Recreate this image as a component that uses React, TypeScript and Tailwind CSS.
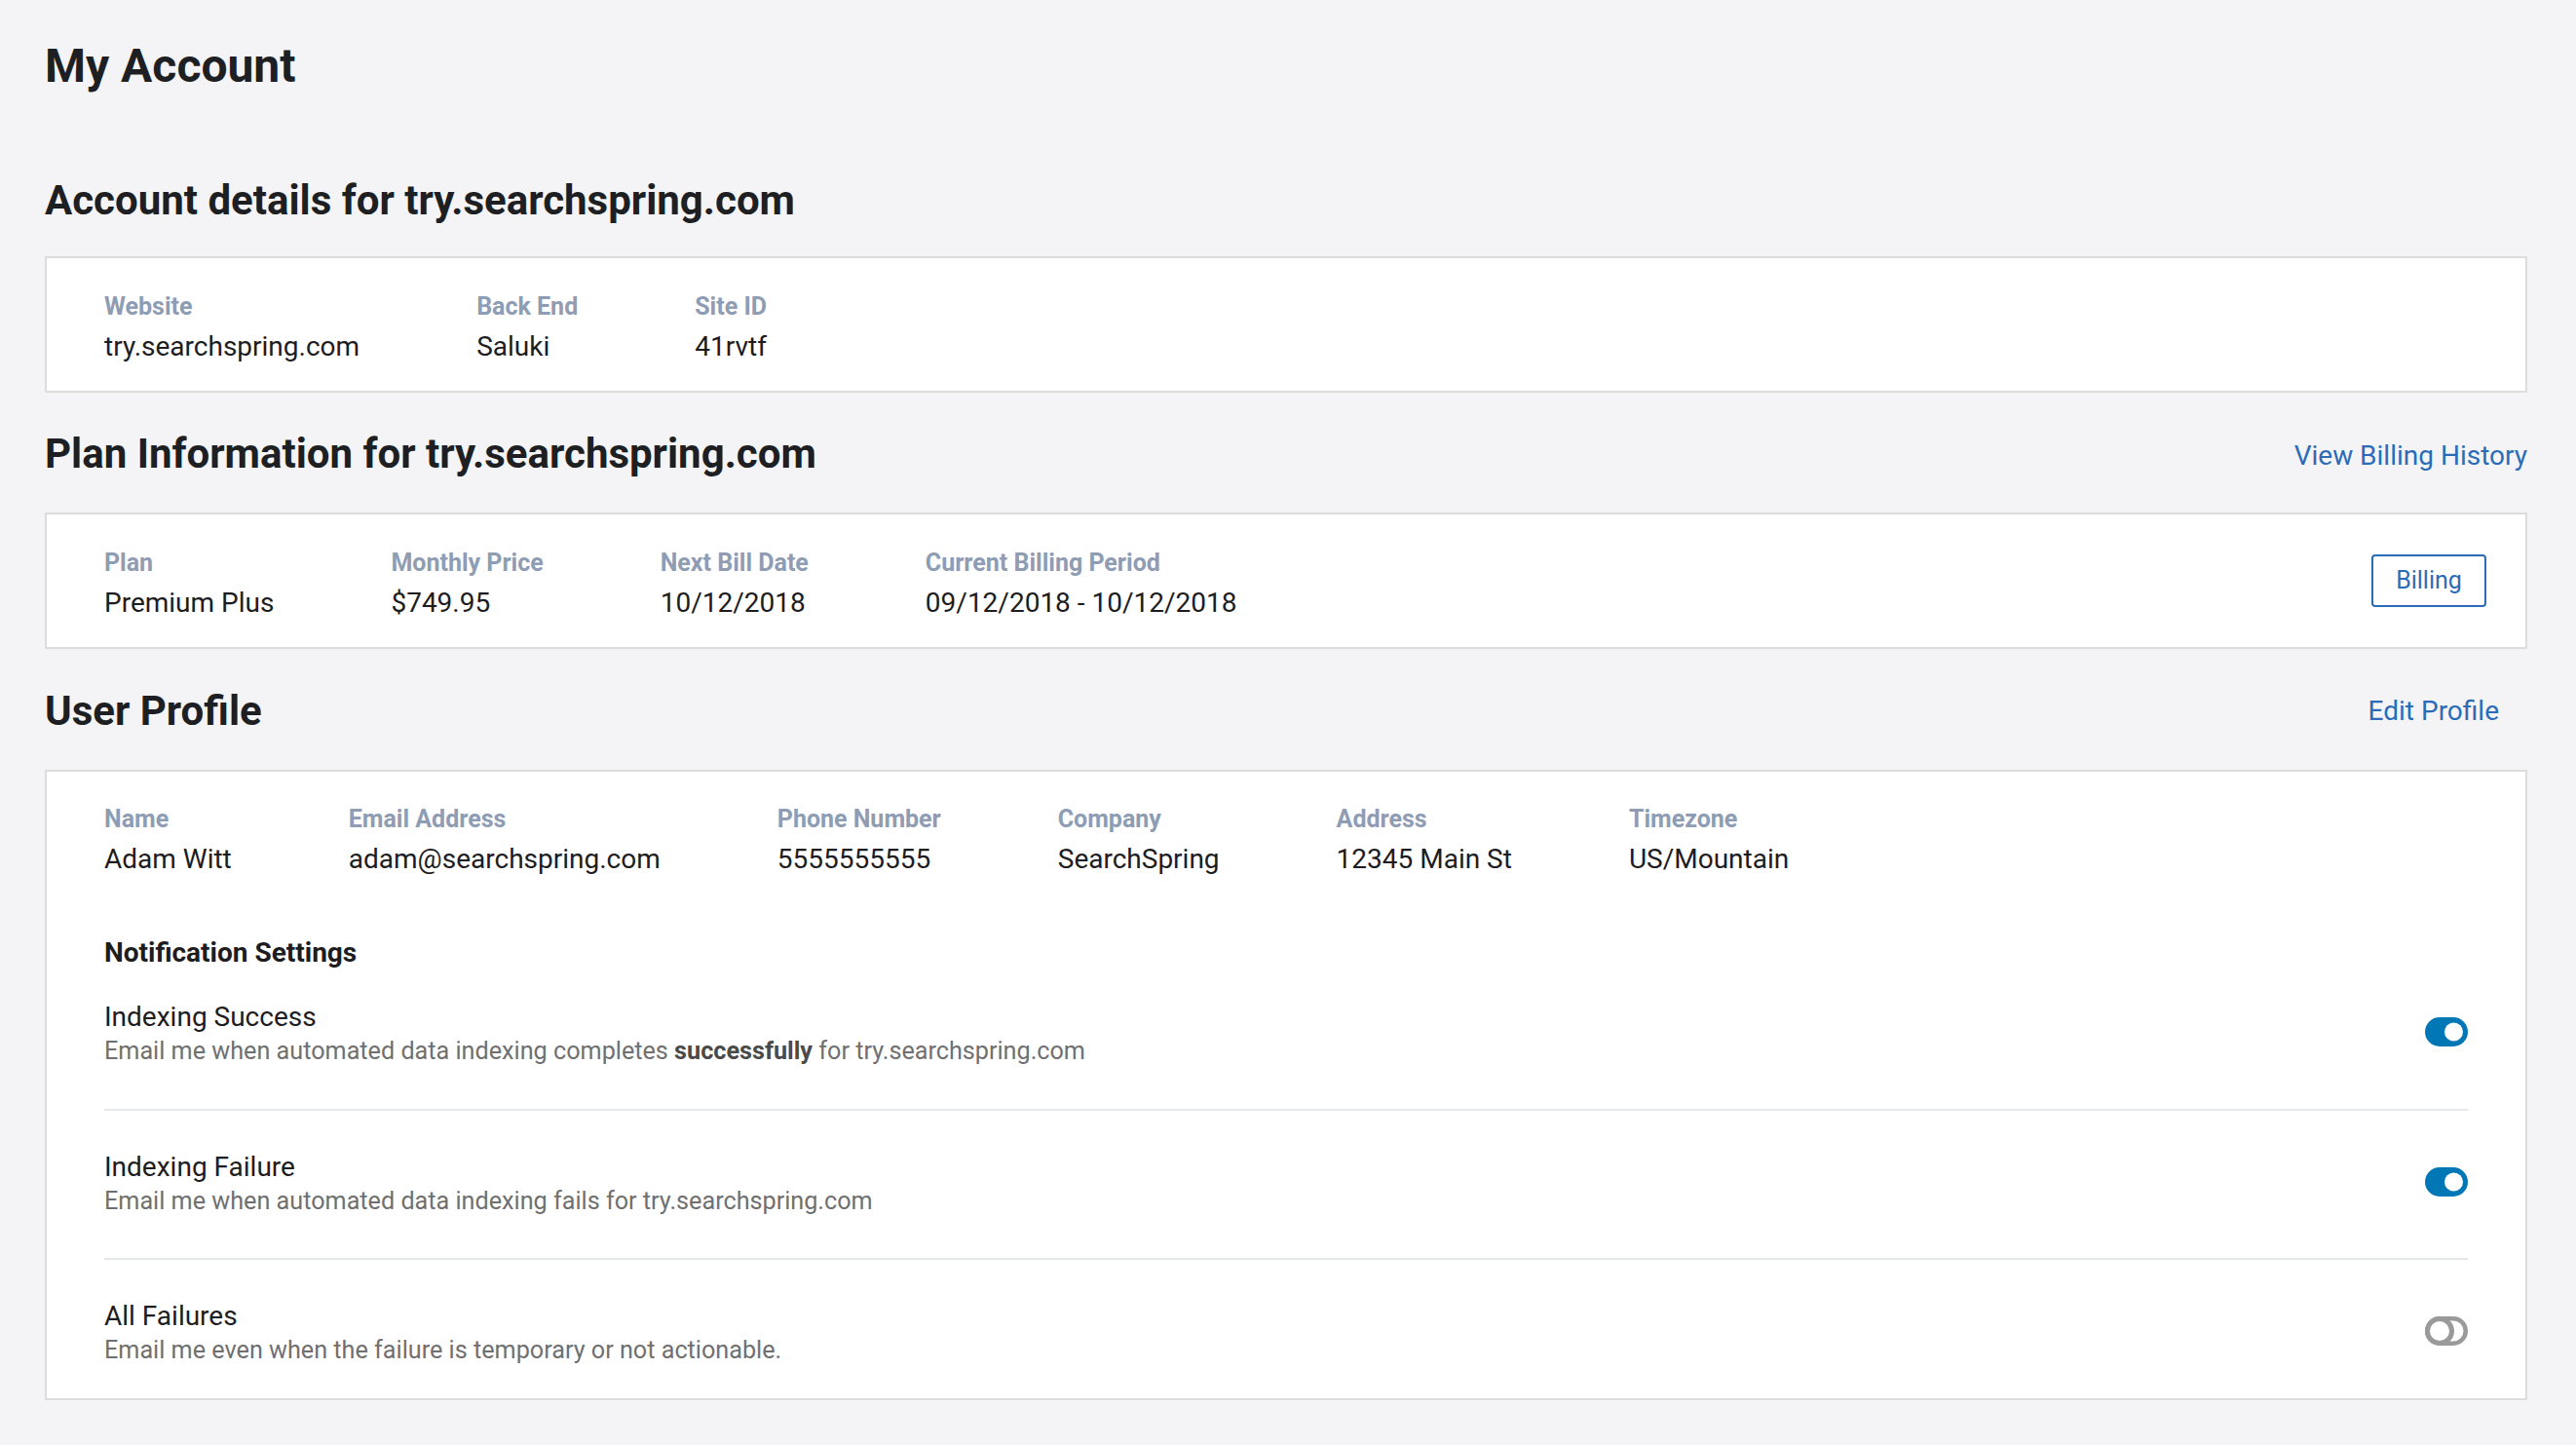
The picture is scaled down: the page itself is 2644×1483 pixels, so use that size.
import React from "react";

function Field({ label, value }: { label: string; value: string }) {
  return (
    <div className="flex flex-col">
      <div className="text-[25px] leading-[34px] font-bold text-[#8e9cb4] whitespace-nowrap">{label}</div>
      <div className="mt-[7px] text-[28px] leading-[34px] text-[#1d1d1f] whitespace-nowrap">{value}</div>
    </div>
  );
}

function ToggleOn() {
  return (
    <svg width="44" height="30" viewBox="0 0 44 30" className="shrink-0 mb-[4px]">
      <rect x="0" y="0" width="44" height="30" rx="15" fill="#0277b6" />
      <circle cx="29.5" cy="15" r="9.5" fill="#ffffff" />
    </svg>
  );
}

function ToggleOff() {
  return (
    <svg width="44" height="30" viewBox="0 0 44 30" className="shrink-0 mb-[4px]">
      <rect x="0" y="0" width="44" height="30" rx="15" fill="#9a9a9a" />
      <rect x="4.5" y="4.5" width="35" height="21" rx="10.5" fill="#ffffff" />
      <circle cx="15" cy="15" r="15" fill="#9a9a9a" />
      <circle cx="15" cy="15" r="10" fill="#ffffff" />
    </svg>
  );
}

function NotifRow({
  title,
  desc,
  on,
  className,
}: {
  title: string;
  desc: React.ReactNode;
  on: boolean;
  className: string;
}) {
  return (
    <div className={"flex items-center justify-between " + className}>
      <div className="flex flex-col">
        <div className="text-[28px] leading-[35px] text-[#1d1d1f]">{title}</div>
        <div className="text-[25.2px] leading-[35px] text-[#707070]">{desc}</div>
      </div>
      {on ? <ToggleOn /> : <ToggleOff />}
    </div>
  );
}

export default function App() {
  return (
    <div className="min-h-screen bg-[#f4f4f6] pl-[46px] pr-[50px] pt-[40px] pb-[46px] font-[Roboto,sans-serif] text-[#1e1f23]">
      <h1 className="text-[48px] leading-[56px] font-bold">My Account</h1>

      <h2 className="mt-[86px] text-[42px] leading-[48px] font-bold">Account details for try.searchspring.com</h2>
      <div className="mt-[33px] bg-white border-2 border-[#dcdcdc] pl-[59px] pt-[33px] pb-[28px] flex gap-[120px]">
        <Field label="Website" value="try.searchspring.com" />
        <Field label="Back End" value="Saluki" />
        <Field label="Site ID" value="41rvtf" />
      </div>

      <div className="mt-[39px] flex items-center justify-between">
        <h2 className="text-[42px] leading-[48px] font-bold">Plan Information for try.searchspring.com</h2>
        <a className="mt-[3px] text-[28px] leading-[34px] text-[#2a6cb8] cursor-pointer">View Billing History</a>
      </div>
      <div className="mt-[36px] bg-white border-2 border-[#dcdcdc] pl-[59px] pr-[40px] pt-[33px] pb-[28px] flex items-center justify-between">
        <div className="flex gap-[120px]">
          <Field label="Plan" value="Premium Plus" />
          <Field label="Monthly Price" value="$749.95" />
          <Field label="Next Bill Date" value="10/12/2018" />
          <Field label="Current Billing Period" value="09/12/2018 - 10/12/2018" />
        </div>
        <button className="mb-[5px] w-[118px] h-[54px] border-2 border-[#2a6cb8] rounded-[4px] text-[25px] text-[#2a6cb8] bg-white">
          Billing
        </button>
      </div>

      <div className="mt-[40px] flex items-center justify-between">
        <h2 className="text-[42px] leading-[48px] font-bold">User Profile</h2>
        <a className="mr-[29px] text-[28px] leading-[34px] text-[#2a6cb8] cursor-pointer">Edit Profile</a>
      </div>
      <div className="mt-[36px] bg-white border-2 border-[#dcdcdc] px-[59px] pt-[32px] pb-[32px]">
        <div className="flex gap-[120px]">
          <Field label="Name" value="Adam Witt" />
          <Field label="Email Address" value="adam@searchspring.com" />
          <Field label="Phone Number" value="5555555555" />
          <Field label="Company" value="SearchSpring" />
          <Field label="Address" value="12345 Main St" />
          <Field label="Timezone" value="US/Mountain" />
        </div>
        <div className="mt-[62px] text-[28px] leading-[34px] font-bold text-[#1d1d1f]">Notification Settings</div>
        <NotifRow
          className="pt-[31px] pb-[42px] border-b-2 border-[#e4e8ec]"
          title="Indexing Success"
          on={true}
          desc={
            <>
              Email me when automated data indexing completes{" "}
              <span className="font-bold text-[#4a4a4a]">successfully</span> for try.searchspring.com
            </>
          }
        />
        <NotifRow
          className="pt-[40px] pb-[41px] border-b-2 border-[#e4e8ec]"
          title="Indexing Failure"
          on={true}
          desc="Email me when automated data indexing fails for try.searchspring.com"
        />
        <NotifRow
          className="pt-[40px]"
          title="All Failures"
          on={false}
          desc="Email me even when the failure is temporary or not actionable."
        />
      </div>
    </div>
  );
}
